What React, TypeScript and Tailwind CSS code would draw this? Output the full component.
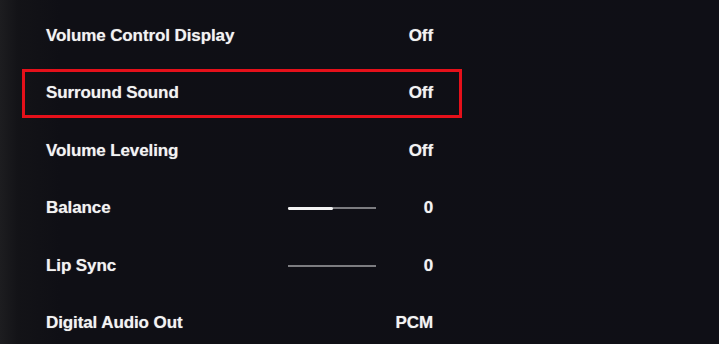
const rows: { label: string; value: string; slider?: number; selected?: boolean }[] = [
  { label: 'Volume Control Display', value: 'Off' },
  { label: 'Surround Sound', value: 'Off', selected: true },
  { label: 'Volume Leveling', value: 'Off' },
  { label: 'Balance', value: '0', slider: 51 },
  { label: 'Lip Sync', value: '0', slider: 0 },
  { label: 'Digital Audio Out', value: 'PCM' },
];

function Slider({ percent }: { percent: number }) {
  return (
    <div className="relative flex h-[4px] w-[88px] items-center">
      <div className="h-[2px] w-full bg-[#7c7c80]" />
      {percent > 0 && (
        <div
          className="absolute left-0 top-[0.5px] h-[3px] rounded-full bg-[#f4f4f4]"
          style={{ width: `${percent}%` }}
        />
      )}
    </div>
  );
}

export default function App() {
  return (
    <div className="h-[344px] w-[719px] overflow-hidden bg-[linear-gradient(90deg,#1d1d20_0px,#131317_18px,#0f0f15_60px,#0f0f16_100%)] font-['Liberation_Sans',Arial,sans-serif]">
      <div className="flex w-[462px] flex-col gap-[8.5px] pl-[22px] pt-[11px]">
        {rows.map((row) => (
          <div
            key={row.label}
            className={`flex h-[49px] items-center border-[3px] pl-[21px] pr-[26px] ${
              row.selected ? 'border-[#e5101a]' : 'border-transparent'
            }`}
          >
            <span className="flex-1 text-[17px] font-bold tracking-[-0.1px] text-[#f3f3f3] [text-shadow:0_0_1px_rgba(255,255,255,0.5)]">
              {row.label}
            </span>
            {row.slider !== undefined && <Slider percent={row.slider} />}
            <span className="w-[57px] text-right text-[17px] font-bold tracking-[-0.1px] text-[#f3f3f3] [text-shadow:0_0_1px_rgba(255,255,255,0.5)]">
              {row.value}
            </span>
          </div>
        ))}
      </div>
    </div>
  );
}
